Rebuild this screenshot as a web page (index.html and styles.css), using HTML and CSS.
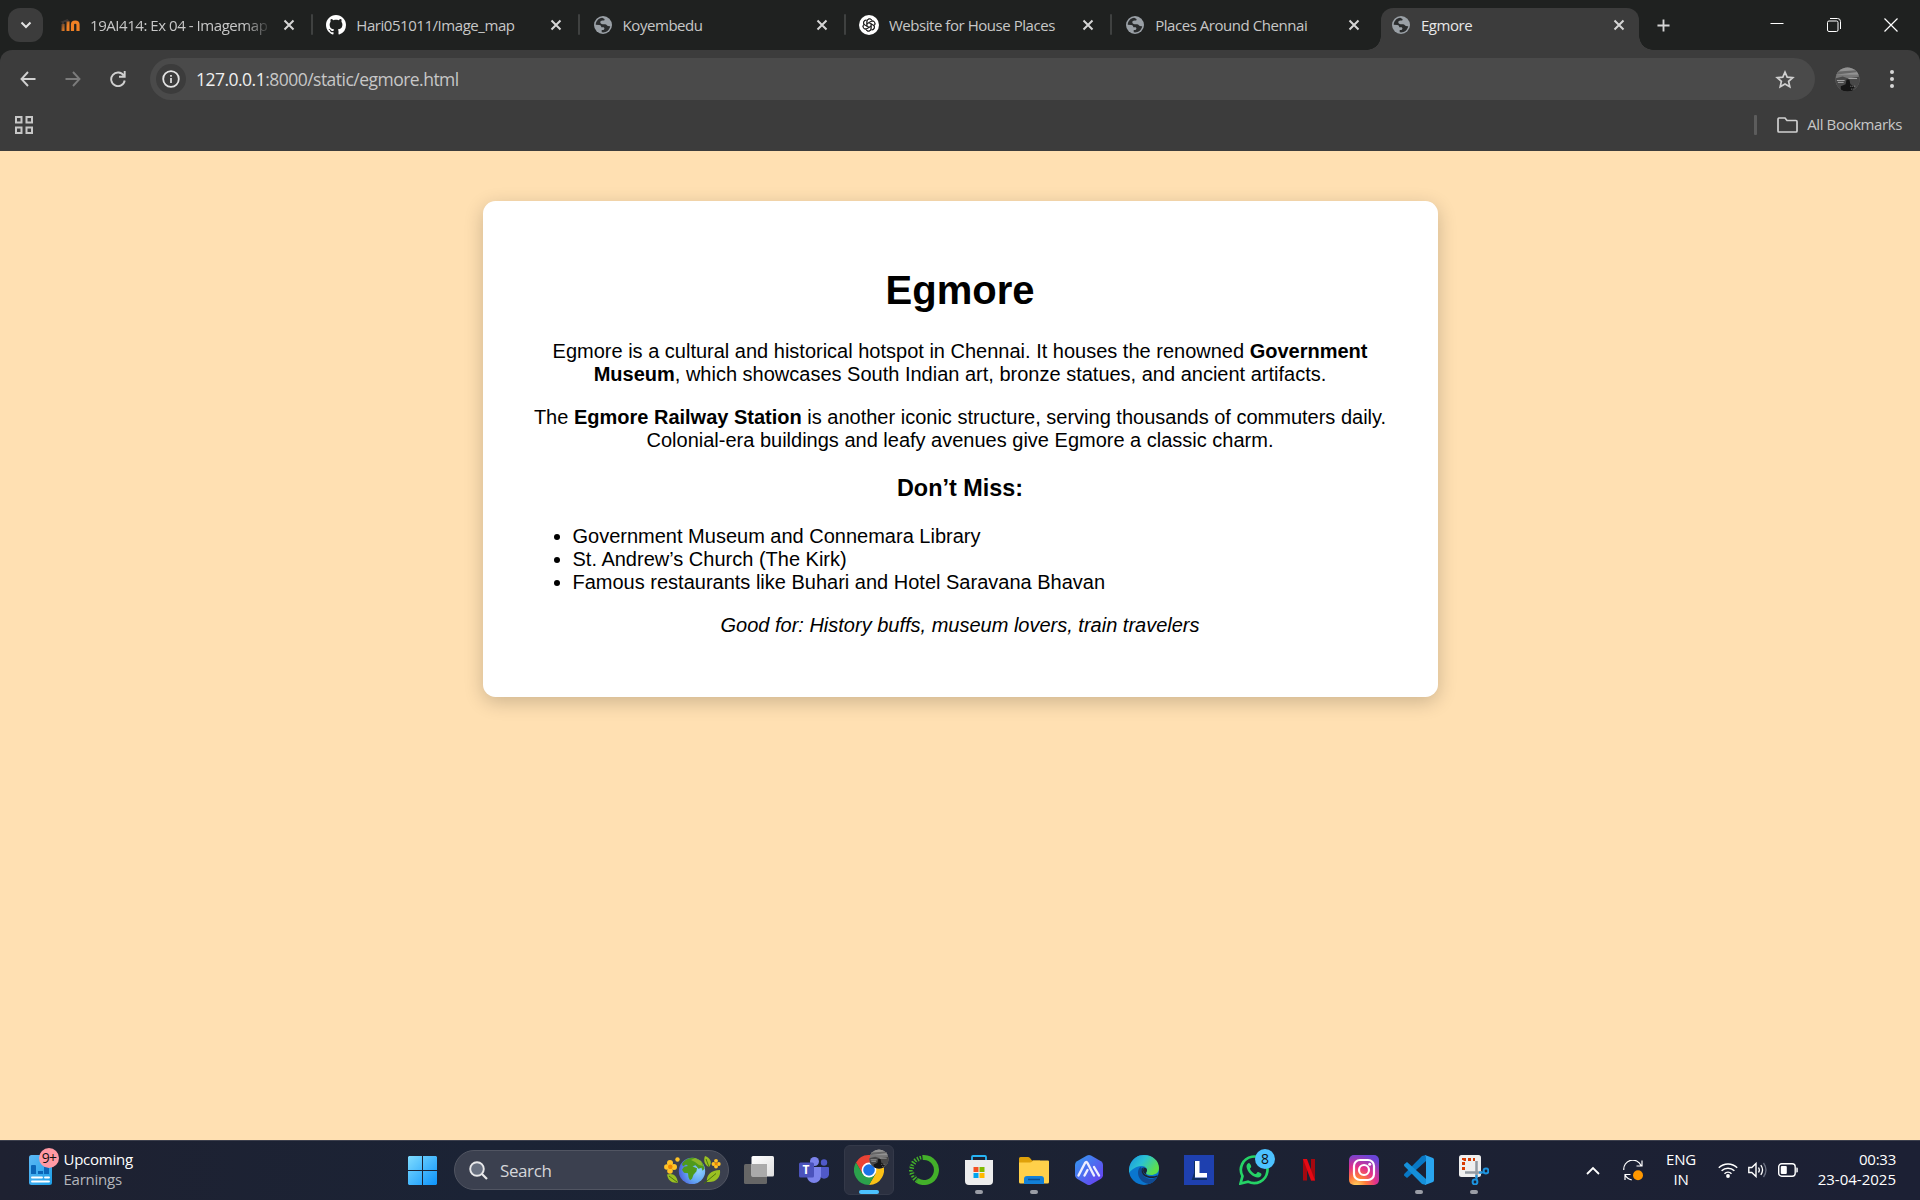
FILE: index.html
```html
<!DOCTYPE html>
<html lang="en">
<head>
<meta charset="utf-8">
<title>Egmore</title>
<link rel="stylesheet" href="styles.css">
</head>
<body>
<svg class="defs" width="0" height="0" aria-hidden="true">
  <defs>
    <symbol id="globe" viewBox="0 0 20 20">
      <circle cx="10" cy="10" r="9" fill="#9aa0a6"/>
      <path d="M9.2 2.8C5.600 3 3 6 2.700 9.700l3.600.3c1.400.2 2 1 2 2.200h1.900c.8 0 1.200.6 1.200 1.400 0 .9-.6 1.500-1.500 1.500H8.700v2.200c4 .7 8-2 8.500-6.300-1 .3-2 .2-2.800-.3-.8-.6-1-1.500-2.200-1.500H9.600C8.100 9.200 7.300 8.400 7.300 7.300c0-1.200.9-1.900 2.200-1.900h1.100c.9 0 1.100-.7.900-1.500z" fill="#2a2c2d"/>
    </symbol>
    <symbol id="close" viewBox="0 0 12 12"><path d="M1.500 1.500l9 9M10.500 1.500l-9 9" stroke="currentColor" stroke-width="2" fill="none"/></symbol>
    <symbol id="photo" viewBox="0 0 26 26">
      <clipPath id="photo-clip"><circle cx="13" cy="13" r="12.500"/></clipPath>
      <g clip-path="url(#photo-clip)">
        <rect width="26" height="26" fill="#777"/>
        <rect width="26" height="8" fill="#929292"/>
        <path d="M0 5l26-2v2L0 8z" fill="#666"/>
        <path d="M0 12l8-2 6 2 12-2v16H0z" fill="#484848"/>
        <path d="M2 14h8M14 12h9M3 16h6" stroke="#aaa" stroke-width="1"/>
        <path d="M6 26v-6l5-2 1-5h3l1 5 4 2v6z" fill="#151515"/>
        <path d="M16 20h6M17 23h4" stroke="#999" stroke-width="1" stroke-dasharray="1 1"/>
      </g>
    </symbol>
  </defs>
</svg>

<header class="browser">
  <div class="tabstrip">
    <button class="tab-search" aria-label="Search tabs"><svg width="12" height="8" viewBox="0 0 12 8"><path d="M1.500 1.500L6 6l4.500-4.500" fill="none" stroke="#e3e3e3" stroke-width="2"/></svg></button>
    <div class="tab">
      <svg class="favicon" viewBox="0 0 20 20"><defs><linearGradient id="moodle" gradientUnits="userSpaceOnUse" x1="0" y1="5" x2="8" y2="10"><stop offset=".2" stop-color="#3a3432"/><stop offset="1" stop-color="#f08024"/></linearGradient></defs><path d="M0 7l7.500-3L10 7H4v3H2V7.500z" fill="#3d3735"/><path d="M3 16V9M8 16V6.500" fill="none" stroke="url(#moodle)" stroke-width="3"/><path d="M12.500 16V9.500c0-3.200 5.500-3.200 5.500 0V16" fill="none" stroke="#f08024" stroke-width="3.200"/></svg>
      <span class="title t-moodle">19AI414: Ex 04 - Imagemap</span><svg class="x"><use href="#close"/></svg>
    </div>
    <div class="tab">
      <svg class="favicon" viewBox="0 0 16 16"><path fill="#fff" d="M8 0C3.580 0 0 3.580 0 8c0 3.540 2.290 6.530 5.470 7.590.4.070.55-.17.55-.38 0-.19-.01-.82-.01-1.490-2.010.37-2.530-.49-2.690-.94-.09-.23-.48-.94-.82-1.130-.28-.15-.68-.52-.01-.53.63-.01 1.080.58 1.230.82.72 1.210 1.870.87 2.330.66.070-.52.28-.87.51-1.070-1.780-.2-3.640-.89-3.640-3.950 0-.87.31-1.590.82-2.150-.08-.2-.36-1.020.08-2.120 0 0 .67-.21 2.200.82.64-.18 1.320-.27 2-.27s1.360.09 2 .27c1.530-1.040 2.200-.82 2.200-.82.44 1.100.16 1.920.08 2.120.51.56.82 1.270.82 2.150 0 3.070-1.870 3.750-3.650 3.950.29.25.54.73.54 1.480 0 1.070-.01 1.930-.01 2.200 0 .21.15.46.55.38A8.010 8.010 0 0 0 16 8c0-4.420-3.580-8-8-8z"/></svg>
      <span class="title">Hari051011/Image_map</span><svg class="x"><use href="#close"/></svg>
    </div>
    <div class="tab"><svg class="favicon"><use href="#globe"/></svg><span class="title">Koyembedu</span><svg class="x"><use href="#close"/></svg></div>
    <div class="tab">
      <svg class="favicon" viewBox="0 0 20 20"><defs><path id="petal" d="M7.900 11.200V6.600c0-3.400 4.400-3.800 5.200-1M7.900 8.800l4.200-2.400c2.500-1.300 4.700 1.500 3.300 3.500"/></defs><circle cx="10" cy="10" r="10" fill="#fff"/><g fill="none" stroke="#222" stroke-width=".9"><use href="#petal"/><use href="#petal" transform="rotate(60 10 10)"/><use href="#petal" transform="rotate(120 10 10)"/><use href="#petal" transform="rotate(180 10 10)"/><use href="#petal" transform="rotate(240 10 10)"/><use href="#petal" transform="rotate(300 10 10)"/></g></svg>
      <span class="title">Website for House Places</span><svg class="x"><use href="#close"/></svg>
    </div>
    <div class="tab last"><svg class="favicon"><use href="#globe"/></svg><span class="title">Places Around Chennai</span><svg class="x"><use href="#close"/></svg></div>
    <div class="tab active"><svg class="favicon"><use href="#globe"/></svg><span class="title">Egmore</span><svg class="x"><use href="#close"/></svg></div>
    <svg class="new-tab" viewBox="0 0 14 14"><path d="M7 .5v13M.5 7h13" stroke="#d5d5d5" stroke-width="2"/></svg>
    <div class="window-buttons">
      <svg width="14" height="14" viewBox="0 0 14 14"><path d="M.5 5.500h13" stroke="#fff"/></svg>
      <svg width="14" height="14" viewBox="0 0 14 14" fill="none" stroke="#fff"><rect x=".5" y="3" width="10.500" height="10.500" rx="1.500"/><path d="M3 .5h7.500a3 3 0 0 1 3 3V11"/></svg>
      <svg width="14" height="14" viewBox="0 0 14 14"><path d="M.5.5l13 13M13.500.5l-13 13" stroke="#fff" stroke-width="1.200"/></svg>
    </div>
  </div>
  <div class="toolbar">
    <div class="nav">
      <svg width="16" height="16" viewBox="0 0 16 16"><path d="M15.500 8H1.500M8 1L1.500 8 8 15" fill="none" stroke="#d0d0d0" stroke-width="1.900"/></svg>
      <svg width="16" height="16" viewBox="0 0 16 16"><path d="M.5 8h14M8 1l6.500 7L8 15" fill="none" stroke="#7b7b7b" stroke-width="1.900"/></svg>
      <svg width="16" height="16" viewBox="0 0 16 16"><path d="M13.700 4.600A6.800 6.800 0 1 0 14.700 9.500M14.700 0v5.700H9" fill="none" stroke="#d0d0d0" stroke-width="1.900"/></svg>
    </div>
    <div class="omnibox">
      <span class="info"><svg width="18" height="18" viewBox="0 0 18 18"><circle cx="9" cy="9" r="7.800" fill="none" stroke="#e3e3e3" stroke-width="1.800"/><path d="M9 8v5M9 5v1.700" stroke="#e3e3e3" stroke-width="1.700"/></svg></span>
      <span class="url"><b>127.0.0.1</b>:8000/static/egmore.html</span>
      <svg class="star" width="20" height="19" viewBox="0 0 20 19"><path d="M10 2.200l2.200 5 5.600.5-4.200 3.700 1.200 5.400L10 14l-4.800 2.800 1.200-5.400-4.200-3.700 5.600-.5z" fill="none" stroke="#d0d0d0" stroke-width="1.700"/></svg>
    </div>
    <svg class="avatar" width="25" height="25"><use href="#photo"/></svg>
    <svg class="kebab" width="6" height="20" viewBox="0 0 6 20" fill="#d6d6d6"><circle cx="3" cy="3" r="2"/><circle cx="3" cy="10" r="2"/><circle cx="3" cy="17" r="2"/></svg>
  </div>
  <div class="bookmarks">
    <svg width="18" height="18" viewBox="0 0 18 18"><path d="M1 1h5.500v5.500H1zM11.500 1H17v5.500h-5.500zM1 11.500h5.500V17H1zM11.500 11.500H17V17h-5.500z" fill="none" stroke="#c7c7c7" stroke-width="2"/></svg>
    <div class="all">
      <span class="bar"></span>
      <svg width="21" height="16" viewBox="0 0 21 16"><path d="M1 2.500V14q0 1 1 1h17q1 0 1-1V4.500q0-1-1-1h-9L8 1H2Q1 1 1 2.500z" fill="none" stroke="#d0d0d0" stroke-width="1.700"/></svg>
      <span class="all-label">All Bookmarks</span>
    </div>
  </div>
</header>

<main class="page">
  <article class="card">
    <h1>Egmore</h1>
    <p>Egmore is a cultural and historical hotspot in Chennai. It houses the renowned <b>Government Museum</b>, which showcases South Indian art, bronze statues, and ancient artifacts.</p>
    <p>The <b>Egmore Railway Station</b> is another iconic structure, serving thousands of commuters daily. Colonial-era buildings and leafy avenues give Egmore a classic charm.</p>
    <h3>Don’t Miss:</h3>
    <ul>
      <li>Government Museum and Connemara Library</li>
      <li>St. Andrew’s Church (The Kirk)</li>
      <li>Famous restaurants like Buhari and Hotel Saravana Bhavan</li>
    </ul>
    <p><em>Good for: History buffs, museum lovers, train travelers</em></p>
  </article>
</main>

<footer class="taskbar">
  <div class="widget">
    <div class="widget-icon">
      <svg width="24" height="30" viewBox="0 0 24 30"><defs><linearGradient id="doc" x2="1" y2="1"><stop stop-color="#5cb8f5"/><stop offset="1" stop-color="#1d9fe8"/></linearGradient></defs><rect width="23" height="30" rx="2.500" fill="url(#doc)"/><path d="M2 19v-8q0-1 1-1h3q1 0 1 1v8zM9 19v-3h5v3zM15 19v-7h5v7z" fill="#0b66b8"/><path d="M3 22.500h10M16 22.500h4M3 26.500h17" stroke="#fff" stroke-width="1.900" stroke-linecap="round"/></svg>
      <span class="count">9+</span>
    </div>
    <div class="widget-text"><span>Upcoming</span><span class="dim">Earnings</span></div>
  </div>

  <svg class="start" width="29" height="29" viewBox="0 0 29 29"><defs><linearGradient id="win" x2="1" y2="1"><stop stop-color="#7fdcff"/><stop offset="1" stop-color="#0c93fb"/></linearGradient></defs><path d="M1 0h13v14H0V1zM15 0h13l1 1v13H15zM0 15h14v14H1l-1-1zM15 15h14v13l-1 1H15z" fill="url(#win)"/></svg>

  <div class="search">
    <svg width="19" height="19" viewBox="0 0 19 19"><circle cx="8" cy="8" r="6.800" fill="#687080" stroke="#e8e8ea" stroke-width="1.900"/><path d="M13 13l5 5" stroke="#e8e8ea" stroke-width="2.200"/></svg>
    <span class="search-label">Search</span>
    <svg class="doodle" width="57" height="28" viewBox="0 0 57 28">
      <defs><radialGradient id="sea" cx=".75" cy=".5" r=".8"><stop stop-color="#8fd0ff"/><stop offset=".5" stop-color="#64a8f5"/><stop offset="1" stop-color="#4a58d8"/></radialGradient></defs>
      <circle cx="28" cy="15" r="13.200" fill="url(#sea)"/>
      <path d="M18 8c2-3.500 6-6 10-6.200 4-.2 9 2.500 11 6l1.500 5-2 2-1-3-3 1-3-3.500-3 1 2 1 2.500 1-.5 3-3 3.500-1.500 4-2 1.500-1.500-3-.5-4-4-.5-2-3 2-3 4-.8-2-1.500-3 2z" fill="#4f9a1c"/>
      <path d="M27 4l4-2 6 3 2 5-4-1-4-3z" fill="#8db52a"/>
      <g fill="#ffc226"><circle cx="6" cy="7" r="3"/><circle cx="10" cy="11" r="3"/><circle cx="6" cy="15" r="2.800"/><circle cx="2.800" cy="11" r="2.700"/><circle cx="13.500" cy="3.500" r="2.200"/><circle cx="52" cy="4.800" r="1.900"/><circle cx="54.800" cy="8" r="1.900"/><circle cx="52" cy="10.500" r="1.900"/><circle cx="49.500" cy="8" r="1.900"/></g>
      <circle cx="6.300" cy="10.800" r="2.300" fill="#ee8500"/><circle cx="52.200" cy="7.800" r="1.600" fill="#ee8500"/>
      <path d="M3 18.500c6-2 10 1 11 8-6 1-10-2-11-8zM41 0c5 2 8 6 4 11-4-2-6-6-4-11zM43 26c-1-7 4-12 13-12 1 7-4 13-13 12z" fill="#9ac022"/><path d="M5 20l8 6M42 3l3 8M40 27.500l12-10" stroke="#466f09" stroke-width=".9"/>
    </svg>
  </div>

  <div class="apps">
    <span class="app"><svg viewBox="0 0 30 30"><defs><linearGradient id="tv" x2="1" y2="1"><stop stop-color="#fff"/><stop offset="1" stop-color="#dedede"/></linearGradient></defs><rect y="9" width="23" height="20" rx="1.500" fill="#666"/><rect x="7.500" y="1" width="22.500" height="20.500" rx="1.500" fill="url(#tv)"/><path d="M7.500 9H23v12.500H7.500z" fill="#aaa"/></svg></span>
    <span class="app"><svg viewBox="0 0 30 30"><circle cx="15.500" cy="6.500" r="4.500" fill="#7b83eb"/><circle cx="25" cy="7.500" r="3.200" fill="#5059c9"/><path d="M20 12h9q1 0 1 1v6.500a5 5 0 0 1-9 2z" fill="#5059c9"/><path d="M8 12h14v9a7 7 0 0 1-14 0z" fill="#7b83eb"/><rect y="7.500" width="15" height="15" rx="1.500" fill="#4b53bc"/></svg><b class="glyph">T</b></span>
    <span class="app active"><svg viewBox="0 0 30 30"><path d="M2 7.500A15 15 0 0 1 28 7.500H15L8.500 18.700z" fill="#ea4335"/><path d="M28 7.500A15 15 0 0 1 15 30l6.500-11.300V7.500z" fill="#fbc116"/><path d="M2 7.500l6.500 11.200c3 4 9 4.500 13 0L15 30A15 15 0 0 1 2 7.500z" fill="#2ba24c"/><circle cx="15" cy="15" r="7.400" fill="#fff"/><circle cx="15" cy="15" r="5.800" fill="#1a73e8"/></svg><svg class="profile" viewBox="0 0 26 26"><use href="#photo" width="26" height="26"/></svg><i class="run"></i></span>
    <span class="app"><svg viewBox="0 0 30 30"><path d="M15 2.500A12.500 12.500 0 1 1 8 25.400" fill="none" stroke="#43b02a" stroke-width="5"/><path d="M15 2.500A12.500 12.500 0 0 0 8 25.400" fill="none" stroke="#43b02a" stroke-width="5" stroke-dasharray="1.500 1.300"/><path d="M12 0A15 15 0 0 0 3 24M13 5A10.500 10.500 0 0 0 6 21" fill="none" stroke="#1c2233" stroke-width="1.400" stroke-dasharray="2 2.500"/></svg></span>
    <span class="app"><svg viewBox="0 0 30 30"><path d="M8 6V2q0-1 1-1h12q1 0 1 1v4" fill="none" stroke="#27b5f5" stroke-width="1.800"/><path d="M1 5h28v21q0 4-4 4H5q-4 0-4-4z" fill="#ededed"/><path fill="#f25022" d="M9.500 12h5v5h-5z"/><path fill="#7fba00" d="M15.500 12h5v5h-5z"/><path fill="#00a4ef" d="M9.500 18h5v5h-5z"/><path fill="#ffb900" d="M15.500 18h5v5h-5z"/></svg><i class="run idle"></i></span>
    <span class="app"><svg viewBox="0 0 30 30"><path d="M0 10V3.500Q0 2 1.500 2H9q1 0 2 1l2 2.500h8V12z" fill="#dfa10a"/><path d="M0 7.500h11q1 0 2-.8l1-1.200h15q1 0 1 1V27q0 1.500-1.500 1.500h-27Q0 28.500 0 27z" fill="#ffd04a"/><path d="M5 29v-5q0-3 3-3h14q3 0 3 3v5z" fill="#1280d8"/><path d="M9 24.500h12" stroke="#0a4e91" stroke-width="1.500"/></svg><i class="run idle"></i></span>
    <span class="app"><svg viewBox="0 0 30 30"><defs><linearGradient id="hex" x2="1" y2="1"><stop stop-color="#329cf0"/><stop offset="1" stop-color="#6c38f0"/></linearGradient></defs><path d="M13 .6q2-1 4 0l10 5.700q2 1.200 2 3.500v10.400q0 2.300-2 3.500l-10 5.700q-2 1-4 0L3 23.700q-2-1.200-2-3.500V9.800q0-2.300 2-3.500z" fill="url(#hex)"/><path d="M4.500 20.500L11 8q1.300-2 2.500 0L20 20.500M10.500 20.500l3-5.500M20 12l5 8.500" fill="none" stroke="#eef" stroke-width="2.400" stroke-linecap="round"/></svg></span>
    <span class="app"><svg viewBox="0 0 30 30"><defs><linearGradient id="edge" x2="1" y2=".5"><stop stop-color="#1992e0"/><stop offset=".5" stop-color="#2bc3d2"/><stop offset="1" stop-color="#5ee04a"/></linearGradient></defs><circle cx="15" cy="15" r="15" fill="#0a76cf"/><path d="M1 10C4 3 9 0 15 0c9 0 15 6 15 13 0 5-4 7-8 7-3 0-5-1-5-2 0-.7 1-1.200 1-3 0-2.500-2.500-4-6-4C7 11 2 15 0 18q-.5-4 1-8z" fill="url(#edge)"/><path d="M11.500 12C7 15 8 27 20 29c4-1 7-4 8-7-6 4-15 1-15-6 0-2 .5-3-1.500-4z" fill="#104a93"/><path d="M14.500 12c-3 6 4 11.500 13.500 8.500 1 0 1 .5.700 1-6 3.500-16 1-16-5.500 0-2 .3-3 1.800-4z" fill="#1c2233"/><path d="M14.500 12.500c2 0 3.500 1 3.500 2.800s-1 2-1 2.900q0 1 1.500 1.600-4-1-4.500-4z" fill="#1c2233"/></svg></span>
    <span class="app"><svg viewBox="0 0 30 30"><path fill="#1e40af" d="M0 0h30v30H0z"/><path d="M11 6v12l-2 6h14" fill="none" stroke="#102e61" stroke-width="2"/><path d="M11 6h4.500v12H23v4.500H11z" fill="#fff"/></svg></span>
    <span class="app"><svg viewBox="0 0 30 30"><path d="M1.500 28.500l2-7.300A13.300 13.300 0 1 1 9 26.600z" fill="none" stroke="#25d366" stroke-width="2.700"/><path d="M10 8c-1 0-2.500 1.300-2.500 3.500C8 17 14 22.500 19 22.500c2 0 3.500-1.500 3.500-3.500 0-.6-3-2-3.600-2-.7 0-1.400 2-2.100 2-2 0-5.800-4-5.800-5.300 0-.7 1.200-1 1.200-2C12.200 10.500 11 8 10 8z" fill="#25d366"/></svg><span class="badge">8</span></span>
    <span class="app"><svg viewBox="0 0 30 30"><path d="M9 4h4v21.500H9zM17 4h4v21.500h-4z" fill="#a5080f"/><path d="M9 4h4l8 21.500h-4z" fill="#e50914"/></svg></span>
    <span class="app"><svg viewBox="0 0 30 30"><defs><radialGradient id="ig" cx=".25" cy="1.050" r="1.100"><stop stop-color="#ffdc62"/><stop offset=".3" stop-color="#ff7b3a"/><stop offset=".6" stop-color="#e2308c"/><stop offset="1" stop-color="#6a45d8"/></radialGradient></defs><rect width="30" height="30" rx="5" fill="url(#ig)"/><g fill="none" stroke="#fff" stroke-width="2.200"><rect x="5" y="5" width="20" height="20" rx="6"/><circle cx="15" cy="15" r="5"/></g><circle cx="20.700" cy="9.300" r="1.500" fill="#fff"/></svg></span>
    <span class="app"><svg viewBox="0 0 30 30"><path d="M22 6L3 23l-3-2.500L.2 19 18 1l4-1z" fill="#0878c5"/><path d="M22 24L3 7 0 9.500.2 11 18 29l4 1z" fill="#1590da"/><path d="M21 0l8 3q1 .5 1 2v20q0 1.500-1 2l-8 3q1-1 1-3V3q0-2-1-3z" fill="#29a5ef"/></svg><i class="run idle"></i></span>
    <span class="app"><svg viewBox="0 0 30 30"><rect width="22" height="22" rx="2.500" fill="#efefef"/><path d="M4.500 15V4.500H16" fill="none" stroke="#d83b01" stroke-width="3" stroke-dasharray="3 2"/><path d="M17.500 6v17M6 17.500h17" stroke="#929aa2" stroke-width="2.500"/><g fill="none" stroke="#1c94e0" stroke-width="2"><circle cx="16" cy="27" r="2.400"/><circle cx="27" cy="16" r="2.400"/><path d="M17.500 20v5M20 17.500h5"/></g></svg><i class="run idle"></i></span>
  </div>

  <div class="tray">
    <svg class="up" width="14" height="9" viewBox="0 0 14 9"><path d="M1 8l6-6 6 6" fill="none" stroke="#fff" stroke-width="1.800"/></svg>
    <svg class="sync" width="21" height="21" viewBox="0 0 21 21"><path d="M.8 10A9 9 0 0 1 18 5.500M19 .5V6h-5.500M2 20v-5.500h5.500M2.200 15q2 4 6.500 4.800" fill="none" stroke="#fff" stroke-width="1.200"/><circle cx="15" cy="15.300" r="5" fill="#ff9800"/></svg>
    <div class="lang"><span>ENG</span><span>IN</span></div>
    <svg class="wifi" width="20" height="16" viewBox="0 0 20 16"><path d="M.8 5.700a13 13 0 0 1 18.400 0M3.600 8.800a9 9 0 0 1 12.800 0M6.500 11.700a5 5 0 0 1 7 0" fill="none" stroke="#fff" stroke-width="1.500"/><circle cx="10" cy="14" r="1.900" fill="#fff"/></svg>
    <svg class="vol" width="20" height="16" viewBox="0 0 20 16"><path d="M.8 5.500h3L8 1.500v13l-4.200-4h-3z" fill="none" stroke="#fff" stroke-width="1.400"/><path d="M10.500 5.500q1.700 2.500 0 5M12.800 3.200q3.500 4.800 0 9.600" fill="none" stroke="#fff" stroke-width="1.300"/><path d="M15.500 1q5 7 0 14" fill="none" stroke="#6b7080" stroke-width="1.300"/></svg>
    <svg class="battery" width="20" height="14" viewBox="0 0 20 14"><rect x=".7" y=".8" width="16.500" height="12.400" rx="3" fill="none" stroke="#fff" stroke-width="1.400"/><rect x="2.800" y="3" width="6" height="8" rx="1" fill="#fff"/><path d="M18.300 4.500h.5q1 0 1 1.200v2.600q0 1.200-1 1.200h-.5z" fill="#fff"/></svg>
    <div class="clock"><span>00:33</span><span class="date">23-04-2025</span></div>
  </div>
</footer>
</body>
</html>
```
FILE: styles.css
```css
* { box-sizing: border-box; }
html, body { height: 100%; }
body {
  margin: 0;
  display: flex;
  flex-direction: column;
  overflow: hidden;
  background: #ffe0b2;
  font-family: "Liberation Sans", Arial, sans-serif;
  font-size: 20px;
}
svg { display: block; flex: none; }
.defs { position: absolute; }

/* Browser chrome */
.browser {
  flex: none;
  height: 151px;
  background: #1f2120;
  color: #c7c7c7;
  font-family: "Open Sans", "Noto Sans", sans-serif;
  font-size: 15px;
}
.tabstrip { display: flex; height: 50px; padding-left: 8px; }
.tab-search {
  flex: none;
  display: grid;
  place-items: center;
  width: 35px;
  height: 34px;
  margin: 8px 2px 0 0;
  padding: 0;
  border: 0;
  border-radius: 12px;
  background: #3c3c3c;
}
.tab {
  position: relative;
  flex: none;
  display: flex;
  align-items: center;
  width: 266.3px;
  padding: 0 16px 0 15px;
}
.tab::after {
  content: "";
  position: absolute;
  right: -2px;
  top: 14px;
  width: 2px;
  height: 21px;
  border-radius: 1px;
  background: #3f4140;
}
.tab.last::after { display: none; }
.favicon { width: 20px; height: 20px; margin-right: 10px; }
.title { flex: 1; overflow: hidden; white-space: nowrap; letter-spacing: -0.45px; line-height: 24px; }
.t-moodle { margin-right: 11px; mask-image: linear-gradient(90deg, #000 85%, transparent); }
.x { width: 12px; height: 12px; color: #d5d5d5; }
.tab.active {
  width: 258px;
  height: 42px;
  margin: 8px 0 0 4.500px;
  padding: 0 14px 8px 10px;
  border-radius: 12px 12px 0 0;
  background: #3c3c3c;
  color: #e8e8e8;
}
.tab.active::before, .tab.active::after {
  content: "";
  position: absolute;
  top: auto;
  bottom: 0;
  width: 14px;
  height: 14px;
  border-radius: 0;
}
.tab.active::before { left: -14px; background: radial-gradient(circle at 0 0, transparent 13.500px, #3c3c3c 14px); }
.tab.active::after { right: -14px; background: radial-gradient(circle at 100% 0, transparent 13.500px, #3c3c3c 14px); }
.new-tab { width: 13px; height: 13px; margin: 18.500px 0 0 18px; }
.window-buttons { display: flex; gap: 43px; margin: 18px 22px 0 auto; }

.toolbar {
  display: flex;
  align-items: center;
  height: 58px;
  padding: 0 25px 0 20px;
  border-radius: 12px 12px 0 0;
  background: #3c3c3c;
}
.nav { display: flex; gap: 29px; width: 130px; }
.omnibox {
  display: flex;
  align-items: center;
  width: 1665px;
  height: 42px;
  padding: 0 20px 0 6px;
  border-radius: 21px;
  background: #4a4a4a;
}
.info { display: grid; place-items: center; width: 30px; height: 30px; margin-right: 10px; border-radius: 50%; background: #3c3c3c; }
.url { font-size: 17.500px; letter-spacing: -0.52px; }
.url b { color: #f0f0f0; font-weight: 400; }
.star { margin-left: auto; }
.avatar { margin-left: 19.500px; }
.kebab { margin-left: auto; }
.bookmarks {
  display: flex;
  align-items: center;
  justify-content: space-between;
  height: 43px;
  padding: 0 18px 9px 15px;
  background: #3c3c3c;
}
.all { display: flex; align-items: center; }
.bar { width: 3px; height: 20px; margin-right: 19.500px; border-radius: 1px; background: #5c5c5c; }
.all-label { margin: -2px 0 0 9.500px; letter-spacing: -0.4px; white-space: nowrap; }

/* Page content */
.page { flex: 1; min-height: 0; padding: 50px 0; background: #ffe0b2; }
.card {
  width: 955px;
  margin: 0 auto;
  padding: 40px;
  border-radius: 12.500px;
  background: #fff;
  color: #000;
  text-align: center;
  box-shadow: 0 5px 18.750px rgba(0, 0, 0, 0.2);
}
h1 { margin: 26.500px 0 27.500px; font-size: 40px; line-height: 45px; }
h3 { margin: 23.400px 0 22.400px; font-size: 23.400px; line-height: 27px; }
.card p { margin: 20px 0; line-height: 23px; }
.card ul { margin: 20px 0; padding-left: 50px; line-height: 23px; text-align: left; }

/* Taskbar */
.taskbar {
  flex: none;
  display: flex;
  align-items: center;
  height: 60px;
  padding: 0 24px 1px 29px;
  border-top: 1px solid #3d404d;
  background: linear-gradient(90deg, #1e2131, #1b2335 25%, #1c2233 60%, #1c2034);
  color: #fff;
  font-family: "Open Sans", "Noto Sans", sans-serif;
  font-size: 15px;
}
.widget { display: flex; align-items: center; gap: 10.500px; width: 379px; }
.widget-icon { position: relative; top: -0.500px; }
.count {
  position: absolute;
  left: 10px;
  top: -7px;
  width: 20px;
  height: 20px;
  border-radius: 50%;
  background: #ff99a4;
  color: #111;
  font-size: 14px;
  line-height: 20px;
  letter-spacing: -0.8px;
  text-align: center;
}
.widget-text, .lang, .clock { display: flex; flex-direction: column; padding-bottom: 2px; line-height: 20px; white-space: nowrap; letter-spacing: -0.25px; }
.dim { color: #b4b6bc; }
.search {
  display: flex;
  align-items: center;
  width: 275px;
  height: 40px;
  margin-left: 17px;
  padding: 0 7px 0 14px;
  border: 1px solid #515562;
  border-radius: 20px;
  background: #3b404f;
}
.search-label { margin-left: 12px; color: #d5d6da; font-size: 17px; letter-spacing: -0.4px; }
.doodle { margin-left: auto; }
.apps { display: flex; margin-left: 2px; }
.app { position: relative; display: grid; place-items: center; width: 55px; height: 50px; }
.app > svg { width: 30px; height: 30px; }
.app.active::before {
  content: "";
  position: absolute;
  inset: 0 2.500px;
  border: 1px solid #343949;
  border-radius: 6px;
  background: #2b3040;
}
.app.active > svg { position: relative; }
.app.active > .profile { position: absolute; left: 28px; top: 4px; width: 20px; height: 20px; }
.glyph { position: absolute; left: 12.500px; top: 15px; width: 15px; font-size: 12px; line-height: 20px; text-align: center; }
.run { position: absolute; left: 17.500px; bottom: 1px; width: 20px; height: 4px; border-radius: 2px; background: #4cc2ff; }
.run.idle { left: 23.500px; width: 8px; background: #9a9da6; }
.badge {
  position: absolute;
  left: 29px;
  top: 4px;
  width: 20px;
  height: 20px;
  border-radius: 50%;
  background: #4cc2ff;
  color: #111;
  font-size: 14px;
  line-height: 20px;
  text-align: center;
}
.tray { display: flex; align-items: center; margin-left: auto; }
.sync { margin-left: 23px; }
.lang { margin-left: 22px; width: 30px; align-items: center; }
.wifi { margin-left: 22px; }
.vol { margin-left: 10px; }
.battery { margin-left: 10px; }
.clock { width: 98px; align-items: flex-end; }
.date { letter-spacing: 0; }
```
